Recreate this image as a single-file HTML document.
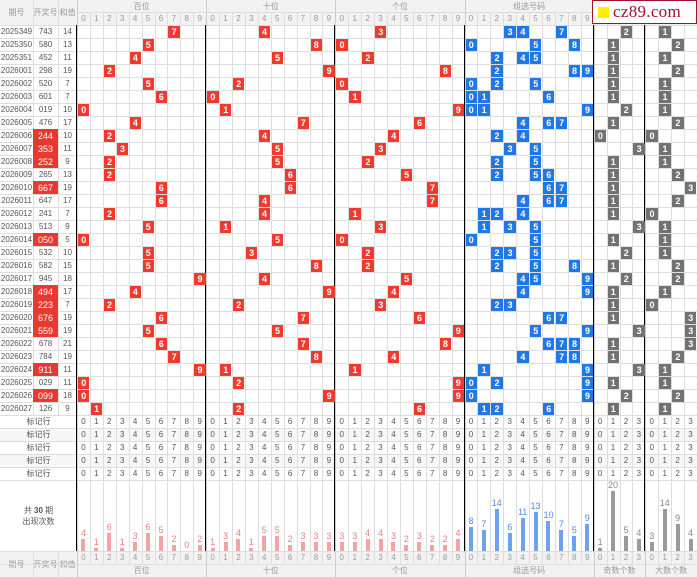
<!DOCTYPE html>
<html><head><meta charset="utf-8">
<style>
*{margin:0;padding:0;box-sizing:border-box}
body{width:697px;height:577px;overflow:hidden;background:#fff;font-family:"Liberation Sans","Noto Sans CJK SC",sans-serif;position:relative}
.a{position:absolute;display:flex;align-items:center;justify-content:center;white-space:nowrap}
.t{font-size:8px;color:#555}
.h{font-size:8px;color:#999}
.c{font-size:9px;color:#fff;font-weight:bold}
.ln{position:absolute;background:#ddd}
.bk{position:absolute;background:#000}
</style></head><body>
<div id="g"></div>
<div class="a" style="left:592px;top:0;width:105px;height:24px;background:#fff;border:1px solid #a0102a;justify-content:flex-start;padding-left:5px;z-index:5">
<span style="display:inline-block;width:11px;height:11px;background:#ffee00;margin-right:4px"></span>
<span style="font-family:'Liberation Serif',serif;font-size:17px;color:#a0102a;letter-spacing:0.3px">cz89.com</span></div>
<script>
var D=[["2025349","743",14],["2025350","580",13],["2025351","452",11],["2026001","298",19],["2026002","520",7],["2026003","601",7],["2026004","019",10],["2026005","476",17],["2026006","244",10],["2026007","353",11],["2026008","252",9],["2026009","265",13],["2026010","667",19],["2026011","647",17],["2026012","241",7],["2026013","513",9],["2026014","050",5],["2026015","532",10],["2026016","582",15],["2026017","945",18],["2026018","494",17],["2026019","223",7],["2026020","676",19],["2026021","559",19],["2026022","678",21],["2026023","784",19],["2026024","911",11],["2026025","029",11],["2026026","099",18],["2026027","126",9]];
var H='',X0=77,W=620/48,R=13,Y0=25;
function box(x,y,w,h,cls,txt,st){H+='<div class="a '+cls+'" style="left:'+x+'px;top:'+y+'px;width:'+w+'px;height:'+h+'px;'+(st||'')+'">'+txt+'</div>';}
function cx(i){return X0+i*W;}
box(0,0,697,25,'','','background:#f2f2f2');
box(0,551,697,26,'','','background:#f2f2f2');
for(var m=0;m<5;m++)box(0,415+m*13,697,13,'','',m%2?'background:#f7f7f7':'');
box(0,0,33,25,'h','期号');box(33,0,25,25,'h','开奖号');box(58,0,19,25,'h','和值');
box(0,551,33,26,'h','期号');box(33,551,25,26,'h','开奖号');box(58,551,19,26,'h','和值');
var G=[['百位',10],['十位',10],['个位',10],['组选号码',10],['奇数个数',4],['大数个数',4]];
var ci=0;
G.forEach(function(g){box(cx(ci),0,g[1]*W,12,'h',g[0]);box(cx(ci),564,g[1]*W,13,'h',g[0]);
 for(var k=0;k<g[1];k++){box(cx(ci+k),12,W,13,'h',k);box(cx(ci+k),551,W,13,'h',k);
  for(var m=0;m<5;m++)box(cx(ci+k),415+m*13,W,13,'t',k);}
 ci+=g[1];});
for(var m=0;m<5;m++)box(0,415+m*13,77,13,'t','标记行');
for(var r=0;r<=35;r++)H+='<div class="ln" style="left:0;top:'+(Y0+r*R)+'px;width:697px;height:1px"></div>';
H+='<div class="ln" style="left:0;top:551px;width:697px;height:1px"></div><div class="ln" style="left:0;top:564px;width:697px;height:1px"></div><div class="ln" style="left:77px;top:12px;width:620px;height:1px"></div>';
[33,58].forEach(function(x){H+='<div class="ln" style="left:'+x+'px;top:0;width:1px;height:415px"></div><div class="ln" style="left:'+x+'px;top:551px;width:1px;height:26px"></div>';});
for(var k=0;k<48;k++)H+='<div class="ln" style="left:'+Math.round(cx(k))+'px;top:12px;width:1px;height:552px"></div>';
[0,10,20,30,40,44].forEach(function(k){H+='<div class="bk" style="left:'+(Math.round(cx(k))-1)+'px;top:25px;width:2px;height:526px"></div><div class="ln" style="left:'+Math.round(cx(k))+'px;top:0;width:1px;height:577px;background:#ccc"></div>';});
var cnt=[];for(var k=0;k<48;k++)cnt[k]=0;
D.forEach(function(d,i){var y=Y0+i*R,s=d[1],dg=s.split('').map(Number);
 var grp=(dg[0]==dg[1]||dg[1]==dg[2]||dg[0]==dg[2]);
 box(0,y,33,R,'t',d[0]);
 box(33,y,25,R,grp?'c':'t',s,grp?'background:#e8382f;font-weight:normal':'');
 box(58,y,19,R,'t',d[2]);
 function cell(k,v,col){box(cx(k)+1,y+1,W-1.5,R-1.5,'c',v,'background:'+col);}
 dg.forEach(function(v,p){cnt[p*10+v]++;cnt[30+v]++;cell(p*10+v,v,'#ef3a2f');});
 var u={};dg.forEach(function(v){u[v]=1;});
 for(var v=0;v<10;v++)if(u[v])cell(30+v,v,'#1f78e6');
 var od=dg.filter(function(v){return v%2}).length,bg=dg.filter(function(v){return v>=5}).length;
 cnt[40+od]++;cnt[44+bg]++;
 cell(40+od,od,'#727272');cell(44+bg,bg,'#727272');
});
box(0,504,77,12,'t','共 <b>&nbsp;30&nbsp;</b> 期');box(0,515,77,12,'t','出现次数');
for(var k=0;k<48;k++){var c=k<30?'#f3a3a3':k<40?'#6ea2ee':'#9a9a9a',tc=k<30?'#e98080':k<40?'#4f8be6':'#888';
 var h=cnt[k]*3,x=cx(k)+W/2-2;
 H+='<div style="position:absolute;left:'+x+'px;top:'+(551-h)+'px;width:4px;height:'+h+'px;background:'+c+'"></div>';
 box(cx(k),551-h-12,W,11,'','<span style="font-size:9px;color:'+tc+'">'+cnt[k]+'</span>');}
document.getElementById('g').innerHTML=H;
</script>
</body></html>
